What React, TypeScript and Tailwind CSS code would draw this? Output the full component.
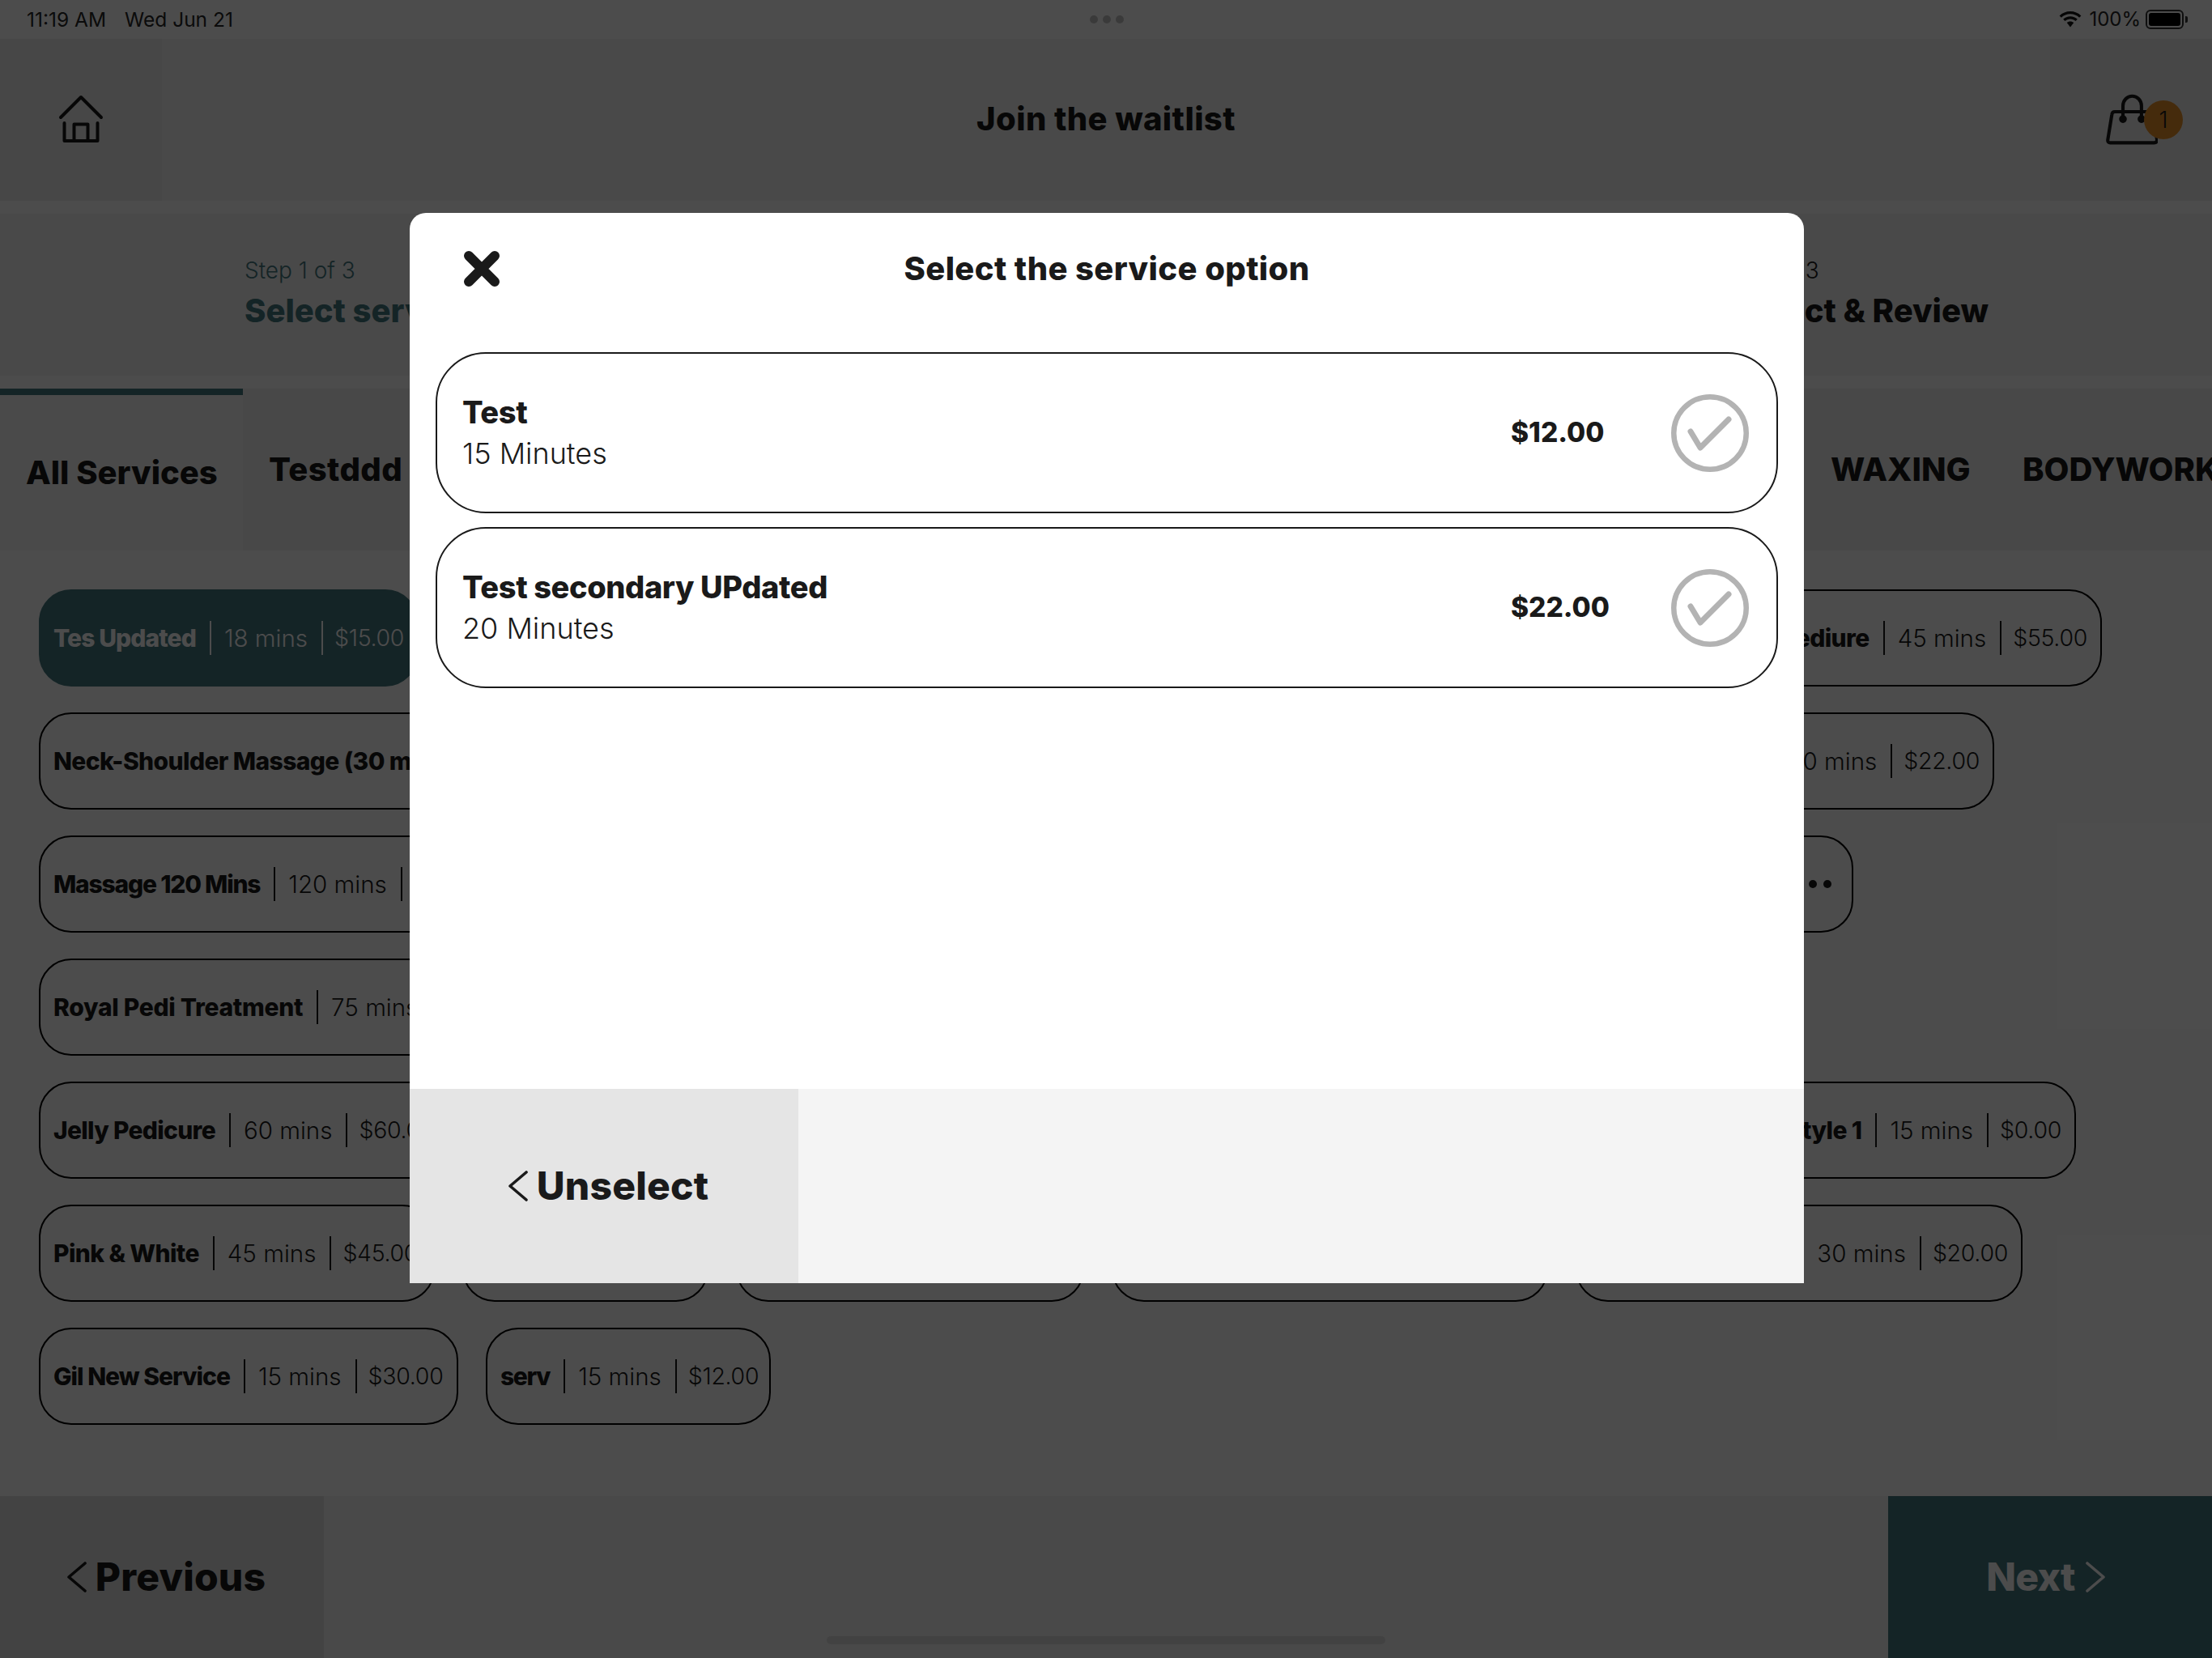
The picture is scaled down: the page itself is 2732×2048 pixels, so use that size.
import React from "react";

type ChipData = {
  name?: string;
  time?: string;
  price?: string;
  w: string;
  tr?: string;
  end?: boolean;
  dots?: boolean;
  active?: boolean;
};

const rows: ChipData[][] = [
  [
    { name: "Tes Updated", time: "18 mins", price: "$15.00", w: "w-[468px]", active: true, tr: "tracking-[-0.9px]" },
    { w: "w-[1316px]" },
    { name: "Gel Pediure", time: "45 mins", price: "$55.00", w: "w-[696px]", end: true, tr: "tracking-[-0.6px]" },
  ],
  [
    { name: "Neck-Shoulder Massage (30 mins)", time: "30 mins", price: "$30.00", w: "w-[900px]", tr: "tracking-[-0.6px]" },
    { w: "w-[884px]" },
    { name: "Hand", time: "20 mins", price: "$22.00", w: "w-[563px]", end: true, tr: "tracking-[-0.6px]" },
  ],
  [
    { name: "Massage 120 Mins", time: "120 mins", price: "$120.00", w: "w-[700px]", tr: "tracking-[-1.2px]" },
    { w: "w-[1084px]" },
    { w: "w-[389px]", end: true, dots: true },
  ],
  [{ name: "Royal Pedi Treatment", time: "75 mins", price: "$75.00", w: "w-[720px]", tr: "tracking-[-0.3px]" }],
  [
    { name: "Jelly Pedicure", time: "60 mins", price: "$60.00", w: "w-[560px]", tr: "tracking-[-0.7px]" },
    { w: "w-[1224px]" },
    { name: "Hair Style 1", time: "15 mins", price: "$0.00", w: "w-[664px]", end: true, tr: "tracking-[-0.6px]" },
  ],
  [
    { name: "Pink & White", time: "45 mins", price: "$45.00", w: "w-[489px]", tr: "tracking-[-0.6px]" },
    { w: "w-[304px]" },
    { w: "w-[430px]" },
    { w: "w-[539px]" },
    { name: "Facial", time: "30 mins", price: "$20.00", w: "w-[552px]", end: true, tr: "tracking-[-0.6px]" },
  ],
  [
    { name: "Gil New Service", time: "15 mins", price: "$30.00", w: "w-[518px]", tr: "tracking-[-1px]" },
    { name: "serv", time: "15 mins", price: "$12.00", w: "w-[352px]", tr: "tracking-[-1.4px]" },
  ],
];

function Sep({ active }: { active?: boolean }) {
  return <span className={`mx-[17px] h-[42px] w-[2px] shrink-0 ${active ? "bg-white" : "bg-[#1a1a1a]"}`} />;
}

function Chip({ c }: { c: ChipData }) {
  const tone = c.active ? "bg-[#44787f] text-white border-[#44787f]" : "border-black text-[#1a1a1a]";
  return (
    <div
      className={`flex h-[120px] shrink-0 items-center overflow-hidden whitespace-nowrap rounded-[40px] border-2 ${tone} ${c.w} ${
        c.end ? "justify-end pr-[16px]" : "pl-[16px]"
      }`}
    >
      {c.name && <span className={`text-[30px] font-extrabold ${c.tr}`}>{c.name}</span>}
      {c.time && (
        <>
          <Sep active={c.active} />
          <span className="-ml-[1px] text-[29.5px] font-light">{c.time}</span>
          <Sep active={c.active} />
          <span className="-ml-[3px] text-[28.5px] font-light tracking-[-0.3px]">{c.price}</span>
        </>
      )}
      {c.dots && (
        <span className="flex gap-[8px] pr-[9px]">
          <span className="size-[10px] rounded-full bg-[#1a1a1a]" />
          <span className="size-[10px] rounded-full bg-[#1a1a1a]" />
        </span>
      )}
    </div>
  );
}

function Chevron({ dir, color }: { dir: "left" | "right"; color: string }) {
  return (
    <svg width="26" height="38" viewBox="0 0 26 38" fill="none" className="shrink-0">
      <path
        d={dir === "left" ? "M23 2 L3 19 L23 36" : "M3 2 L23 19 L3 36"}
        stroke={color}
        strokeWidth="3.6"
        strokeLinecap="round"
        strokeLinejoin="round"
      />
    </svg>
  );
}

function Option({ name, time, price }: { name: string; time: string; price: string }) {
  return (
    <div className="flex h-[199px] items-center rounded-[62px] border-2 border-[#1a1a1a] pl-[31px] pr-[34px] text-[#1a1a1a]">
      <div className="flex flex-col gap-[13px]">
        <span className="text-[38px] leading-[38px] font-extrabold tracking-[-0.4px]">{name}</span>
        <span className="text-[36px] leading-[38px] font-light">{time}</span>
      </div>
      <span className="ml-auto w-[198px] text-[33.5px] font-extrabold">{price}</span>
      <svg width="96" height="96" viewBox="0 0 96 96" fill="none" className="shrink-0">
        <circle cx="48" cy="48" r="44.75" stroke="#b3b3b3" strokeWidth="6.5" />
        <path d="M24 46 L36 66 L71 31" stroke="#b3b3b3" strokeWidth="7" strokeLinecap="round" strokeLinejoin="round" />
      </svg>
    </div>
  );
}

export default function App() {
  return (
    <div className="relative flex h-[2048px] w-[2732px] flex-col overflow-hidden bg-white font-[Inter,sans-serif] text-[#1a1a1a]">
      {/* status bar */}
      <div className="relative flex h-[48px] shrink-0 items-center pl-[33px] pr-[30px] text-[24.5px] text-[#262626]">
        <span>11:19 AM</span>
        <span className="ml-[23px]">Wed Jun 21</span>
        <div className="ml-[1058px] flex gap-[6px]">
          <span className="size-[10px] rounded-full bg-[#c4c4c4]" />
          <span className="size-[10px] rounded-full bg-[#c4c4c4]" />
          <span className="size-[10px] rounded-full bg-[#c4c4c4]" />
        </div>
        <div className="ml-auto flex items-center text-[24px]">
          <svg width="28" height="20" viewBox="0 0 28 20" className="mr-[9px]">
            <path d="M14 0C8.8 0 4.2 2 .6 5.4l2.3 2.4C5.8 5 9.7 3.3 14 3.3s8.200 1.700 11.100 4.500l2.300-2.400C23.800 2 19.200 0 14 0z" fill="#111" />
            <path d="M14 6.200c-3.400 0-6.500 1.300-8.800 3.500l2.300 2.400c1.700-1.600 4-2.600 6.500-2.600s4.800 1 6.500 2.600l2.300-2.400C20.500 7.500 17.400 6.200 14 6.200z" fill="#111" />
            <path d="M14 12.400c-1.700 0-3.200.7-4.300 1.700L14 19.500l4.300-5.400c-1.100-1-2.600-1.700-4.300-1.700z" fill="#111" />
          </svg>
          <span>100%</span>
          <div className="ml-[6px] flex h-[24px] w-[47px] items-center rounded-[6px] border-2 border-[#333] p-[2px]">
            <span className="h-full w-full rounded-[3px] bg-black" />
          </div>
          <span className="ml-[2px] h-[8px] w-[3px] rounded-r-[2px] bg-[#333]" />
        </div>
      </div>

      {/* header */}
      <div className="flex h-[200px] shrink-0 items-center justify-between bg-[#f4f4f4]">
        <div className="flex h-full w-[200px] items-center justify-center bg-[#eeeeee]">
          <svg width="60" height="64" viewBox="0 0 60 64" fill="none" stroke="#1a1a1a" strokeWidth="4" strokeLinecap="round" strokeLinejoin="round">
            <path d="M5 29 L30 4 L55 29" />
            <path d="M9.500 36 V58 H50.500 V36" />
            <path d="M21.500 58 V37.500 H38.500 V58" />
          </svg>
        </div>
        <h1 className="pb-[2px] text-[40px] font-extrabold tracking-[0.4px]">Join the waitlist</h1>
        <div className="relative flex h-full w-[200px] items-center bg-[#eeeeee] pl-[69px]">
          <svg width="64" height="64" viewBox="0 0 70 70" fill="none" stroke="#1a1a1a" strokeWidth="4.5" strokeLinecap="round" strokeLinejoin="round">
            <path d="M23 34 V16 A12.500 13 0 0 1 48 16 V34" />
            <path d="M12 24 H60 Q63 24 63.500 27 L69 62 Q69 66 65 66 H6 Q2 66 2.500 62 L8 28 Q8.500 24 12 24 Z" />
            <circle cx="23" cy="34" r="3" fill="#1a1a1a" />
            <circle cx="48" cy="34" r="3" fill="#1a1a1a" />
          </svg>
          <span className="absolute left-[116px] top-[76px] flex size-[48px] items-center justify-center rounded-full bg-[#e8912a] text-[28px] font-light">1</span>
        </div>
      </div>

      {/* steps */}
      <div className="mt-[16px] flex h-[200px] shrink-0 items-center justify-between bg-[#f4f4f4] pb-[5px] pl-[302px] pr-[276px]">
        <div className="flex flex-col gap-[5px] text-[#44787f]">
          <span className="text-[28px] leading-[40px] font-light">Step 1 of 3</span>
          <span className="text-[40px] leading-[50px] font-extrabold">Select service</span>
        </div>
        <div className="flex w-[352px] flex-col gap-[5px]">
          <span className="text-[28px] leading-[40px] font-light">Step 3 of 3</span>
          <span className="text-right text-[40px] leading-[50px] font-extrabold">Select &amp; Review</span>
        </div>
      </div>

      {/* tabs */}
      <div className="mt-[16px] flex h-[200px] shrink-0 items-center overflow-hidden bg-[#f1f1f1] text-[40px] font-extrabold whitespace-nowrap">
        <div className="flex h-full w-[300px] shrink-0 items-center border-t-8 border-[#44787f] bg-[#f8f8f8] pl-[32px]">All Services</div>
        <div className="w-[240px] shrink-0 pl-[32px] tracking-[0.4px]">Testddd</div>
        <div className="w-[1688px] shrink-0" />
        <div className="w-[237px] shrink-0 pl-[33px]">WAXING</div>
        <div className="shrink-0 pl-[33px]">BODYWORK</div>
      </div>

      {/* chips */}
      <div className="flex flex-col gap-[32px] pl-[48px] pt-[48px]">
        {rows.map((row, i) => (
          <div key={i} className="flex gap-[34px]">
            {row.map((c, j) => (
              <Chip key={j} c={c} />
            ))}
          </div>
        ))}
      </div>

      {/* footer */}
      <div className="mt-auto flex h-[200px] shrink-0 justify-between bg-[#f4f4f4] text-[48px] font-extrabold">
        <div className="flex w-[400px] items-center justify-center gap-[10px] bg-[#e0e0e0] pl-[10px] tracking-[0.2px]">
          <Chevron dir="left" color="#1a1a1a" />
          <span>Previous</span>
        </div>
        <div className="flex w-[400px] items-center justify-center gap-[12px] bg-[#44787f] pr-[10px] tracking-[-0.6px] text-white">
          <span>Next</span>
          <Chevron dir="right" color="#ffffff" />
        </div>
      </div>

      {/* home indicator */}
      <div className="absolute bottom-[17px] left-[1021px] h-[10px] w-[690px] rounded-full bg-[#dddddd]" />

      {/* scrim */}
      <div className="absolute inset-0 bg-black/70" />

      {/* modal */}
      <div className="absolute left-[506px] top-[263px] flex h-[1322px] w-[1722px] flex-col overflow-hidden rounded-t-[20px] bg-white text-[#1a1a1a]">
        <div className="relative flex h-[172px] shrink-0 items-start justify-center pt-[45px]">
          <svg width="46" height="46" viewBox="0 0 46 46" className="absolute left-[66px] top-[46px]" stroke="#1a1a1a" strokeWidth="12" strokeLinecap="round">
            <path d="M7 7 L39 39 M39 7 L7 39" />
          </svg>
          <h2 className="text-[40px] leading-[48px] font-extrabold tracking-[0.4px]">Select the service option</h2>
        </div>
        <div className="flex flex-1 flex-col gap-[17px] px-[32px]">
          <Option name="Test" time="15 Minutes" price="$12.00" />
          <Option name="Test secondary UPdated" time="20 Minutes" price="$22.00" />
        </div>
        <div className="flex h-[240px] shrink-0 bg-[#f4f4f4]">
          <div className="flex w-[480px] items-center justify-center gap-[10px] bg-[#e5e5e5] pl-[10px] text-[48px] font-extrabold tracking-[0.2px]">
            <Chevron dir="left" color="#1a1a1a" />
            <span>Unselect</span>
          </div>
        </div>
      </div>
    </div>
  );
}
